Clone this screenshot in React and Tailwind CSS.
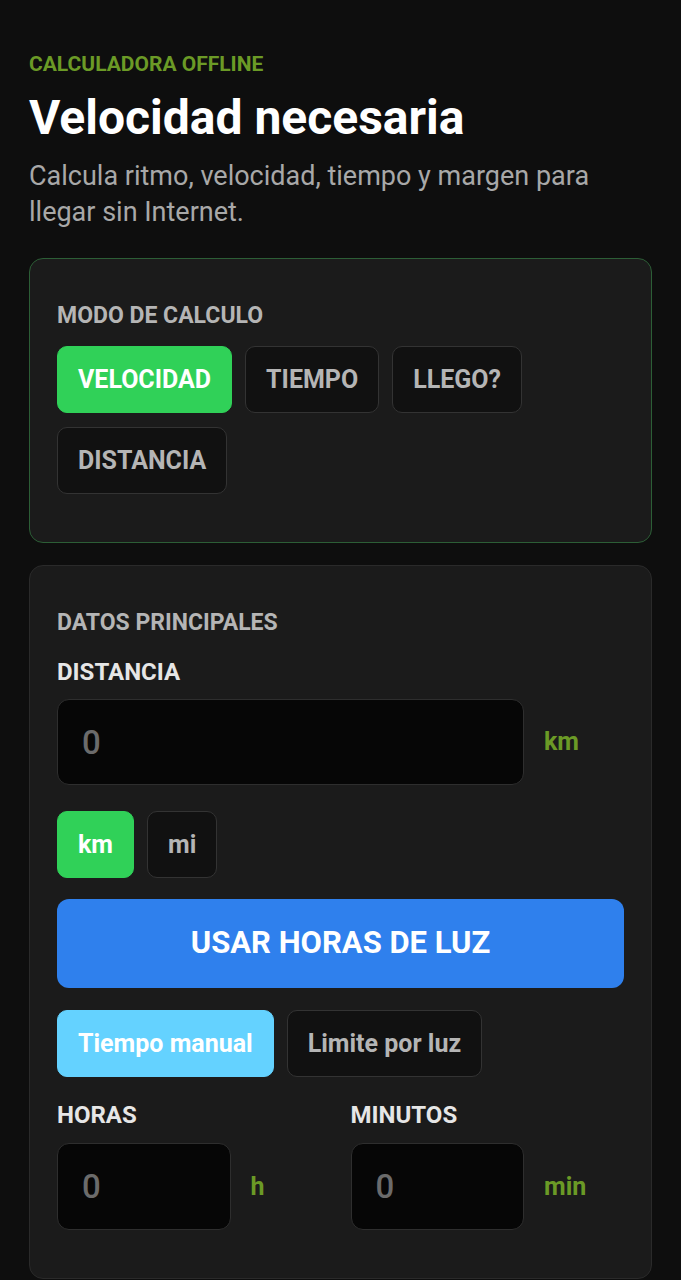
import React, { useState } from "react";

const font = { fontFamily: "Roboto, 'Liberation Sans', sans-serif" };

const Chip = ({ active, activeClass = "bg-[#30d158] border-[#30d158] text-white", onClick, children }) => (
  <button
    onClick={onClick}
    className={`h-[67px] rounded-[10px] border px-[20px] text-[25px] font-bold ${
      active ? activeClass : "bg-[#111111] border-[#333333] text-[#b5b5b5]"
    }`}
  >
    {children}
  </button>
);

const NumberField = ({ unit, value, onChange, height = "h-[87px]" }) => (
  <div className="flex items-center gap-5">
    <input
      type="text"
      value={value}
      onChange={(e) => onChange(e.target.value)}
      placeholder="0"
      className={`${height} min-w-0 flex-1 rounded-[12px] border border-[#2e2e2e] bg-[#060606] px-6 text-[33px] font-medium text-white outline-none placeholder:text-[#6b6b6b]`}
    />
    <span className="w-20 text-[25px] font-bold text-[#6b9a26]">{unit}</span>
  </div>
);

export default function App() {
  const [mode, setMode] = useState("velocidad");
  const [unit, setUnit] = useState("km");
  const [timeMode, setTimeMode] = useState("manual");
  const [distance, setDistance] = useState("");
  const [hours, setHours] = useState("");
  const [minutes, setMinutes] = useState("");

  return (
    <div className="min-h-screen bg-[#0e0e0e] px-[29px] pt-[52px] pb-10" style={font}>
      {/* Header */}
      <p className="text-[21px] font-bold leading-6 text-[#6b9a26]">CALCULADORA OFFLINE</p>
      <h1 className="mt-[14px] text-[48px] font-bold leading-[56px] text-white">Velocidad necesaria</h1>
      <p className="mt-[12px] text-[27px] leading-[36px] text-[#a8a8a8]">
        Calcula ritmo, velocidad, tiempo y margen para llegar sin Internet.
      </p>

      {/* Modo de calculo */}
      <div className="mt-[28px] rounded-[14px] border border-[#2c5e36] bg-[#1b1b1b] px-[27px] pt-[43px] pb-[48px]">
        <p className="text-[23px] font-bold leading-[28px] text-[#b5b5b5]">MODO DE CALCULO</p>
        <div className="mt-[16px] flex flex-wrap gap-x-[13px] gap-y-[14px]">
          {[
            ["velocidad", "VELOCIDAD"],
            ["tiempo", "TIEMPO"],
            ["llego", "LLEGO?"],
            ["distancia", "DISTANCIA"],
          ].map(([key, label]) => (
            <Chip key={key} active={mode === key} onClick={() => setMode(key)}>
              {label}
            </Chip>
          ))}
        </div>
      </div>

      {/* Datos principales */}
      <div className="mt-[22px] rounded-[14px] border border-[#2a2a2a] bg-[#1b1b1b] px-[27px] pt-[43px] pb-[48px]">
        <p className="text-[23px] font-bold leading-[28px] text-[#b5b5b5]">DATOS PRINCIPALES</p>
        <p className="mt-[21px] text-[24px] font-bold leading-[28px] text-[#e6e6e6]">DISTANCIA</p>
        <div className="mt-[13px]">
          <NumberField unit={unit} value={distance} onChange={setDistance} height="h-[86px]" />
        </div>

        <div className="mt-[26px] flex gap-[13px]">
          <Chip active={unit === "km"} onClick={() => setUnit("km")}>km</Chip>
          <Chip active={unit === "mi"} onClick={() => setUnit("mi")}>mi</Chip>
        </div>

        <button className="mt-[21px] h-[89px] w-full rounded-[12px] bg-[#2f80ed] text-[31px] font-bold text-white">
          USAR HORAS DE LUZ
        </button>

        <div className="mt-[22px] flex gap-[13px]">
          <Chip
            active={timeMode === "manual"}
            activeClass="bg-[#64d2ff] border-[#64d2ff] text-white"
            onClick={() => setTimeMode("manual")}
          >
            Tiempo manual
          </Chip>
          <Chip
            active={timeMode === "luz"}
            activeClass="bg-[#64d2ff] border-[#64d2ff] text-white"
            onClick={() => setTimeMode("luz")}
          >
            Limite por luz
          </Chip>
        </div>

        <div className="mt-[24px] grid grid-cols-2 gap-5">
          <div>
            <p className="text-[24px] font-bold leading-[28px] text-[#e6e6e6]">HORAS</p>
            <div className="mt-[14px]">
              <NumberField unit="h" value={hours} onChange={setHours} />
            </div>
          </div>
          <div>
            <p className="text-[24px] font-bold leading-[28px] text-[#e6e6e6]">MINUTOS</p>
            <div className="mt-[14px]">
              <NumberField unit="min" value={minutes} onChange={setMinutes} />
            </div>
          </div>
        </div>
      </div>
    </div>
  );
}
